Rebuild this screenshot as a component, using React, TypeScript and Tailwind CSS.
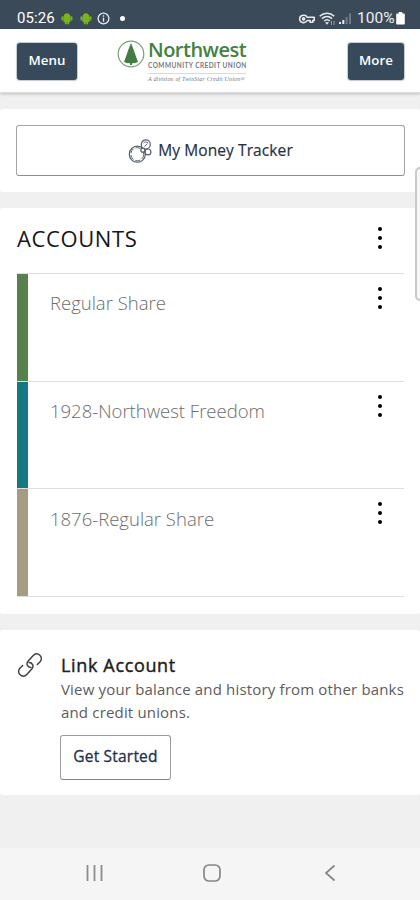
import React from 'react';

type Account = { id: number; name: string; color: string };

const accounts: Account[] = [
  { id: 1, name: 'Regular Share', color: 'bg-[#56804c]' },
  { id: 2, name: '1928-Northwest Freedom', color: 'bg-[#147981]' },
  { id: 3, name: '1876-Regular Share', color: 'bg-[#a69c80]' },
];

const AndroidIcon: React.FC = () => (
  <svg width="12" height="13" viewBox="0 0 12 13" fill="#7ab51d" stroke="#7ab51d">
    <path d="M2.5 5C2.7 2.8 4.1 1.3 6 1.3S9.3 2.8 9.5 5v5h-7z" stroke="none" />
    <path d="M1.5 5.2v2.4M10.5 5.2v2.4M4.8 9v2.6M7.2 9v2.6" strokeWidth="2" strokeLinecap="round" />
  </svg>
);

const StatusBar: React.FC = () => (
  <div className="h-[29px] bg-[#3b4a59] text-white flex items-center justify-between pl-[17px] pr-[15px] pt-[8px] font-['Roboto']">
    <div className="flex items-center">
      <span className="text-[15px] leading-none w-[38px] tracking-[0.1px]">05:26</span>
      <span className="ml-[6px]"><AndroidIcon /></span>
      <span className="ml-[7px]"><AndroidIcon /></span>
      <svg className="ml-[5px]" width="13" height="13" viewBox="0 0 13 13" fill="none" stroke="#e8ebee" strokeWidth="1.3">
        <circle cx="6.5" cy="6.5" r="5.4" />
        <path d="M6.5 3.3v1.4M6.5 5.8v4" />
      </svg>
      <span className="ml-[10px] w-[5px] h-[5px] rounded-full bg-white" />
    </div>
    <div className="flex items-center">
      <svg width="16" height="12" viewBox="0 0 16 12" fill="none" stroke="#e8ebee" strokeWidth="1.6">
        <path d="M8.2 4.3h7v3.2h-1.4v1.7h-2.7V7.5H8.2a4 3.7 0 1 1 0-3.2z" strokeLinejoin="round" />
        <circle cx="4.6" cy="5.9" r="1" />
      </svg>
      <svg className="ml-[4px]" width="17" height="14" viewBox="0 0 17 14" fill="none" stroke="#e8ebee" strokeWidth="1.5">
        <path d="M.7 4.2c4.3-4 10.3-4 14.6 0M3 6.6c3-2.7 7-2.7 10 0M5.2 9c1.7-1.6 3.9-1.6 5.6 0" />
        <path d="M6 10.3L8 12.8l2-2.5z" fill="#e8ebee" stroke="none" />
        <path d="M12.5 9v4M15 9v4" strokeWidth="1" opacity=".5" />
      </svg>
      <svg className="ml-[3px]" width="13" height="13" viewBox="0 0 13 13">
        <path d="M0 10h2v2H0zM3.3 8h2v4h-2z" fill="#e8ebee" />
        <path d="M6.6 5h2v7h-2zM10 1.5h2V12h-2z" fill="#6f7b87" />
      </svg>
      <span className="ml-[5px] text-[15.5px] leading-none w-[37px] text-[#eef0f2]">100%</span>
      <svg className="ml-[2px]" width="9" height="13" viewBox="0 0 9 13" fill="white">
        <path d="M2.7 0h3.6v1.5H8c.5 0 .8.3.8.8v9.4c0 .5-.3.8-.8.8H1c-.5 0-.8-.3-.8-.8V2.3c0-.5.3-.8.8-.8h1.7z" />
      </svg>
    </div>
  </div>
);

const Logo: React.FC = () => (
  <div className="flex items-start w-[131px] h-[46px]">
    <svg className="mt-[1px] shrink-0" width="28" height="28" viewBox="0 0 28 28">
      <circle cx="14" cy="14" r="12.8" fill="none" stroke="#7ba07a" strokeWidth="1.2" />
      <path d="M14 3l2.3 5.7 1.8 5.2 2.9 8.2c-1.8.8-3.8 1.200-6 1.200v1.800h-2v-1.800c-2.200 0-4.200-.4-6-1.200l2.900-8.200 1.800-5.200z" fill="#437d43" />
    </svg>
    <div className="ml-[3px] w-[98px] whitespace-nowrap">
      <div className="font-['Open_Sans'] font-semibold text-[#438241] text-[20px] leading-[21px] tracking-[-0.5px]">Northwest</div>
      <div className="font-['Lato'] font-bold text-[#77787d] text-[6.5px] leading-[8px] mt-[2px] tracking-[0.43px]">COMMUNITY CREDIT UNION</div>
      <div className="border-t border-[#d8dcd8] mt-[3px] pt-[2px] font-['Liberation_Serif'] italic text-[#77777b] text-[6px] leading-[7px] tracking-[0.17px]">A division of TwinStar Credit Union®</div>
    </div>
  </div>
);

const Header: React.FC = () => (
  <header className="h-[64px] bg-white flex items-start pl-[17px] pr-[16px] pt-[14px] border-b border-[#dcdcdc] shadow-[0_1px_3px_rgba(0,0,0,0.22)]">
    <button className="w-[60px] h-[37px] rounded-[3px] bg-[#374a5c] shadow-[0_0_1px_1px_rgba(55,74,92,0.3)] text-white text-[13.3px] font-semibold pb-[2px]">Menu</button>
    <div className="-mt-[4px] ml-[40px]"><Logo /></div>
    <button className="ml-auto w-[56px] h-[37px] rounded-[3px] bg-[#374a5c] shadow-[0_0_1px_1px_rgba(55,74,92,0.3)] text-white text-[13.3px] font-semibold pb-[2px]">More</button>
  </header>
);

const Kebab: React.FC = () => (
  <span className="w-[5px] flex flex-col gap-[5px]">
    <span className="w-[4px] h-[4px] rounded-full bg-black" />
    <span className="w-[4px] h-[4px] rounded-full bg-black" />
    <span className="w-[4px] h-[4px] rounded-full bg-black" />
  </span>
);

const TrackerIcon: React.FC = () => (
  <svg width="24" height="24" viewBox="0 0 24 24" fill="none" stroke="#566170" strokeWidth="1.2">
    <circle cx="9.3" cy="15.2" r="8" />
    <circle cx="9.3" cy="15.2" r="6.5" strokeDasharray="5 2" strokeWidth="1" />
    <circle cx="17.8" cy="5.4" r="4.5" fill="white" />
    <path d="M15.6 4.2a2.6 2.6 0 0 1 4.400 0M16.200 7.600l3.400-3" strokeWidth=".9" />
    <circle cx="20" cy="12.9" r="2.9" fill="white" />
    <circle cx="14.8" cy="11.2" r="2" fill="white" />
  </svg>
);

const LinkIcon: React.FC = () => (
  <svg width="26" height="26" viewBox="0 0 26 26" fill="none" stroke="#3c3c3c" strokeWidth="1.4" strokeLinecap="round">
    <path d="M14 15.500C10.500 15.500 8.800 12 11 9.300L16 3.800c2-2.100 4.600-2.600 6.800-.6s2 4.700.1 6.700l-2.600 2.600" />
    <path d="M12 10.500c3.500 0 5.200 3.500 3 6.200L10 22.200c-2 2.100-4.600 2.600-6.800.6s-2-4.700-.1-6.700l2.600-2.600" />
  </svg>
);

const NavBar: React.FC = () => (
  <nav className="h-[52px] bg-[#f5f5f5] flex items-center pl-[85px] pb-[2px]">
    <svg width="19" height="18" viewBox="0 0 19 18" stroke="#8c8c8c" strokeWidth="1.8">
      <path d="M2.5 1v16M9.5 1v16M16.5 1v16" />
    </svg>
    <svg className="ml-[98px]" width="20" height="20" viewBox="0 0 20 20" fill="none" stroke="#858585" strokeWidth="1.7">
      <rect x="2" y="2" width="16" height="16" rx="5" />
    </svg>
    <svg className="ml-[102px]" width="12" height="18" viewBox="0 0 12 18" fill="none" stroke="#858585" strokeWidth="1.7">
      <path d="M10.5 1.5L2 9l8.5 7.5" />
    </svg>
  </nav>
);

export default function App() {
  return (
    <div className="relative w-[420px] h-[900px] overflow-hidden bg-[#f0f0f0] flex flex-col font-['Open_Sans',sans-serif]">
      <StatusBar />
      <Header />

      <section className="mt-[16px] h-[83px] bg-white rounded-[3px] pl-[16px] pr-[15px] pt-[16px]">
        <button className="w-full h-[51px] border border-[#a4a4a4] border-b-[#8e8e8e] rounded-[3px] flex items-center justify-center text-[#273247] text-[15.5px] tracking-[0.1px] font-medium [-webkit-text-stroke:0.2px_#273247]">
          <TrackerIcon />
          <span className="ml-[6px] pt-px">My Money Tracker</span>
        </button>
      </section>

      <section className="mt-[16px] h-[406px] bg-white rounded-[3px] pl-[17px] pr-[16px]">
        <div className="h-[65px] flex items-center justify-between pr-[21px] pb-[5px]">
          <h2 className="text-[22px] tracking-[0.6px] text-[#161616]">ACCOUNTS</h2>
          <Kebab />
        </div>
        <ul className="border-b border-[#dfdfdf]">
          {accounts.map(account => (
            <li key={account.id} className="h-[107.7px] border-t border-[#dfdfdf] flex">
              <span className={`w-[11px] ${account.color}`} />
              <div className="flex-1 flex justify-between items-start pl-[22px] pr-[21px]">
                <span className="mt-[16.2px] text-[18.5px] leading-[26px] font-light text-[#6c6c6c]">{account.name}</span>
                <span className="mt-[13px]"><Kebab /></span>
              </div>
            </li>
          ))}
        </ul>
      </section>

      <section className="mt-[16px] h-[165px] bg-white rounded-[3px] flex pl-[17px] pt-[22px]">
        <LinkIcon />
        <div className="ml-[18px]">
          <h3 className="text-[18px] leading-[26px] tracking-[0.65px] text-[#202020] [-webkit-text-stroke:0.4px_#202020]">Link Account</h3>
          <p className="w-[350px] text-[15px] leading-[23px] tracking-[0.17px] text-[#5c5c5c] whitespace-nowrap">
            View your balance and history from other banks<br />and credit unions.
          </p>
          <button className="-ml-px mt-[11px] w-[111px] h-[45px] border border-[#9b9b9b] border-b-[#858585] rounded-[3px] text-[15.5px] tracking-[0.2px] text-[#232f4c] [-webkit-text-stroke:0.3px_#232f4c] pb-[1px]">Get Started</button>
        </div>
      </section>

      <div className="flex-1" />
      <NavBar />

      {/* edge panel handle */}
      <div className="absolute left-[415px] top-[167px] w-[10px] h-[134px] rounded-[6px] border-2 border-[#c8c8c8] bg-[#f8f8f8]" />
    </div>
  );
}
